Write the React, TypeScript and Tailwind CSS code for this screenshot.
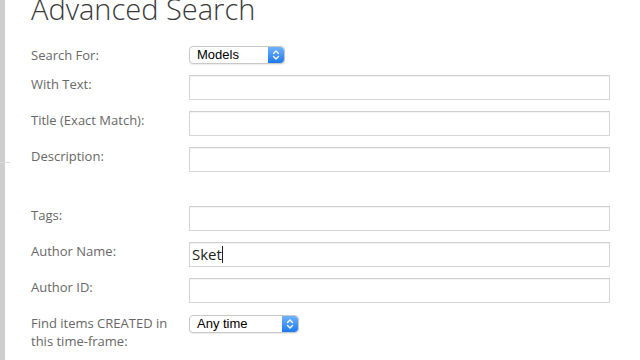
import React from 'react';

const labelCls = "text-[13px] leading-[18px] text-[#686868] font-['Open_Sans',sans-serif]";

const Stepper: React.FC = () => (
  <div className="w-[16px] self-stretch rounded-r-[4px] bg-gradient-to-b from-[#6db3fb] to-[#1a78ee] flex items-center justify-center">
    <svg width="8" height="12" viewBox="0 0 8 12" fill="none" stroke="white" strokeWidth="1.4" strokeLinecap="round" strokeLinejoin="round">
      <path d="M1.5 4.5 L4 2 L6.5 4.5" />
      <path d="M1.5 7.5 L4 10 L6.5 7.5" />
    </svg>
  </div>
);

const Select: React.FC<{ value: string; width: string }> = ({ value, width }) => (
  <div className={`${width} h-[18px] flex rounded-[4px] border border-[#c8c8c8] bg-white shadow-[0_1px_1px_rgba(0,0,0,0.08)]`}>
    <div className="flex-1 flex items-center pl-[7px] text-[13px] font-medium text-black font-['Liberation_Sans',sans-serif]">
      {value}
    </div>
    <Stepper />
  </div>
);

const TextField: React.FC<{ value?: string; caret?: boolean }> = ({ value, caret }) => (
  <div className="w-[421px] h-[25px] border border-[#d6d6d6] border-t-[#cfcfcf] bg-white shadow-[inset_0_1px_1px_rgba(0,0,0,0.05)] flex items-center pl-[2px]">
    {value && (
      <span className="text-[15px] text-[#222] font-['Open_Sans',sans-serif] leading-none">{value}</span>
    )}
    {caret && <span className="w-px h-[17px] bg-[#222]" />}
  </div>
);

const Row: React.FC<{ label: React.ReactNode; children: React.ReactNode; mt: string; lt?: string }> = ({ label, children, mt, lt = 'mt-0' }) => (
  <div className={`flex ${mt}`}>
    <div className={`w-[158px] ${labelCls} ${lt}`}>{label}</div>
    {children}
  </div>
);

export default function App() {
  return (
    <div className="w-[640px] h-[360px] overflow-hidden bg-white flex">
      <div className="w-[10px] flex flex-col">
        <div className="h-[162px] flex">
          <div className="w-[5px] bg-[#cdcdcd]" />
        </div>
        <div className="h-px bg-[#dcdcdc]" />
        <div className="flex-1 flex">
          <div className="w-[5px] bg-[#cdcdcd]" />
        </div>
      </div>
      <div className="flex-1 pl-[21px]">
        <h1 className="mt-[-6px] text-[29px] leading-[29px] font-light text-[#3a3a3a] font-['Open_Sans',sans-serif]">
          Advanced Search
        </h1>
        <Row label="Search For:" mt="mt-[23px]">
          <Select value="Models" width="w-[96px]" />
        </Row>
        <Row label="With Text:" mt="mt-[11px]">
          <TextField />
        </Row>
        <Row label="Title (Exact Match):" mt="mt-[11px]">
          <TextField />
        </Row>
        <Row label="Description:" mt="mt-[11px]">
          <TextField />
        </Row>
        <Row label="Tags:" mt="mt-[34px]">
          <TextField />
        </Row>
        <Row label="Author Name:" mt="mt-[11px]">
          <TextField value="Sket" caret />
        </Row>
        <Row label="Author ID:" mt="mt-[11px]">
          <TextField />
        </Row>
        <Row label={<>Find items CREATED in<br />this time-frame:</>} mt="mt-[12px]" lt="-mt-[1px]">
          <Select value="Any time" width="w-[110px]" />
        </Row>
      </div>
    </div>
  );
}
